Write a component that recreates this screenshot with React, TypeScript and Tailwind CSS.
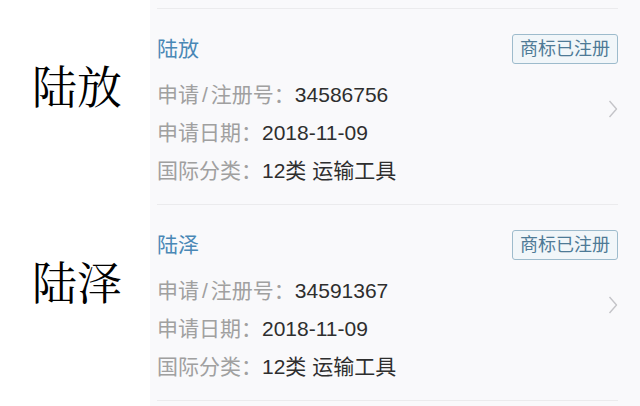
import React from 'react';

type Mark = {
  name: string;
  regNo: string;
  date: string;
  category: string;
};

const marks: Mark[] = [
  { name: '陆放', regNo: '34586756', date: '2018-11-09', category: '12类 运输工具' },
  { name: '陆泽', regNo: '34591367', date: '2018-11-09', category: '12类 运输工具' },
];

const Chevron = () => (
  <svg width="10" height="18" viewBox="0 0 10 18" fill="none">
    <polyline points="1.5,1 8.5,9 1.5,17" stroke="#c4c4c8" strokeWidth="1.4" strokeLinejoin="round" />
  </svg>
);

const InfoRow = ({ label, value }: { label: React.ReactNode; value: string }) => (
  <div className="flex h-[38px] items-center whitespace-nowrap text-[21px]">
    <span className="text-[#a0a0a0]">{label}</span>
    <span className="text-[#2e2e2e]">{value}</span>
  </div>
);

const MarkCard = ({ mark }: { mark: Mark }) => (
  <div className="relative ml-[7px] mr-[22px] h-[196px] border-t border-[#ebebed]">
    <div className="mt-[25px] flex h-[30px] items-center justify-between">
      <span className="text-[21px] text-[#4a88b6]">{mark.name}</span>
      <span className="flex h-[30px] items-center rounded-[3px] border border-[#9dbbcc] bg-[#f1f6f9] px-[7px] text-[18px] text-[#4e7a96]">
        商标已注册
      </span>
    </div>
    <div className="mt-[12px] flex flex-col">
      <InfoRow
        label={
          <>
            申请<span className="mx-[3px]">/</span>注册号：
          </>
        }
        value={mark.regNo}
      />
      <InfoRow label="申请日期：" value={mark.date} />
      <InfoRow label="国际分类：" value={mark.category} />
    </div>
    <div className="absolute right-0 top-[91px]">
      <Chevron />
    </div>
  </div>
);

export default function App() {
  return (
    <div className="flex h-[406px] w-[640px] overflow-hidden bg-white font-['Liberation_Sans','Noto_Sans_CJK_SC',sans-serif]">
      <div className="w-[150px] shrink-0 bg-white pt-[8px]">
        {marks.map((m) => (
          <div
            key={m.name}
            className="h-[196px] pl-[32px] pt-[54px] font-['Noto_Serif_CJK_SC','Noto_Sans_CJK_SC',serif] text-[45px] leading-[46px] text-black"
          >
            {m.name}
          </div>
        ))}
      </div>
      <div className="flex-1 bg-[#f9f9fb] pt-[8px]">
        {marks.map((m) => (
          <MarkCard key={m.name} mark={m} />
        ))}
        <div className="ml-[7px] mr-[22px] border-t border-[#ebebed]" />
      </div>
    </div>
  );
}
